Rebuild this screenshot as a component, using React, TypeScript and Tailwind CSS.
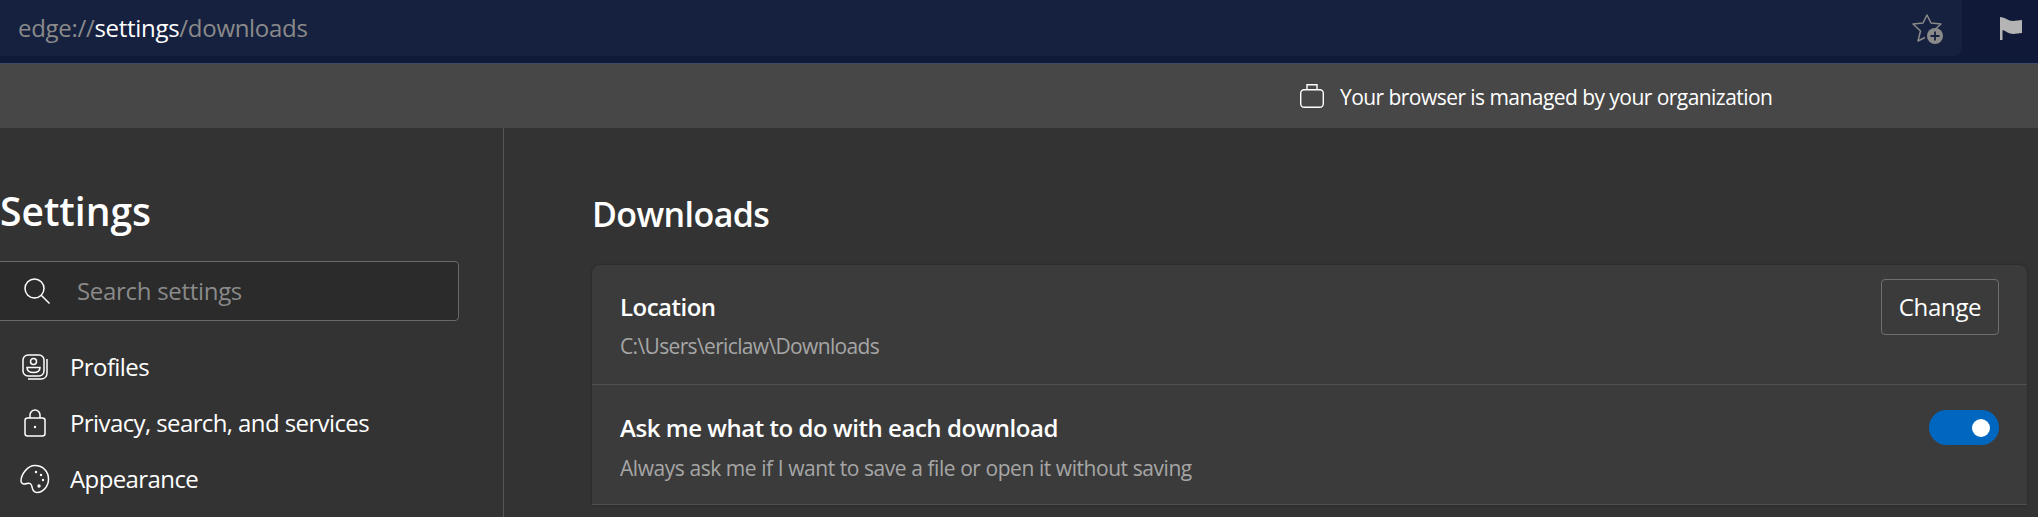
const StarAddIcon = () => (
  <svg width="34" height="34" viewBox="0 0 34 34" fill="none">
    <path
      d="M14 26.500L7 30l2.500-10L2 13l10-1 4-8 4 8 10 1-5 4.500"
      stroke="#8a8a8a"
      strokeWidth="1.500"
      strokeLinejoin="round"
    />
    <circle cx="24" cy="25" r="8" fill="#8a8a8a" />
    <path d="M24 20.500v9M19.500 25h9" stroke="#16213f" strokeWidth="1.800" />
  </svg>
);

const FlagIcon = () => (
  <svg width="22" height="23" viewBox="0 0 22 23">
    <path d="M0 0c5 0 8 4 13 4 3 0 6-1 9-1v13c-3 0-6 1-9 1-4 0-7-3-10.500-4v10H0V0z" fill="#b4b4b4" />
  </svg>
);

const ManagedIcon = () => (
  <svg width="24" height="24" viewBox="0 0 24 24" fill="none" stroke="#fff" strokeWidth="1.400">
    <rect x="0.700" y="5.700" width="22.600" height="17.600" rx="3.500" />
    <path d="M7 5.500V0.700h10V5.500" />
  </svg>
);

const SearchIcon = () => (
  <svg width="26" height="26" viewBox="0 0 26 26" fill="none" stroke="#fff" strokeWidth="1.500">
    <circle cx="10.500" cy="10.500" r="9.500" />
    <path d="M17.500 17.500L25.500 25.500" />
  </svg>
);

const ProfileIcon = () => (
  <svg width="26" height="26" viewBox="0 0 26 26" fill="none" stroke="#fff" strokeWidth="1.500">
    <rect x="1" y="1" width="21" height="21" rx="5" />
    <circle cx="11.500" cy="7.500" r="3" />
    <path d="M5 13.500h13c0 3.500-2.500 5-6.500 5s-6.500-1.500-6.500-5z" />
    <path d="M25 5v14c0 3.500-2.500 6-6 6H6" />
  </svg>
);

const LockIcon = () => (
  <svg width="22" height="28" viewBox="0 0 22 28" fill="none" stroke="#fff" strokeWidth="1.500">
    <rect x="1" y="9" width="20" height="18" rx="2.500" />
    <path d="M6 9V6a5 5 0 0 1 10 0v3" />
    <circle cx="11" cy="18" r="1.200" fill="#fff" stroke="none" />
  </svg>
);

const PaletteIcon = () => (
  <svg width="30" height="30" viewBox="0 0 30 30" fill="none" stroke="#fff" strokeWidth="1.500">
    <path d="M15 1.500c8 0 13.500 6 13.500 13.500S23 28.500 17 28.500c-4 0-4.500-3-5-5.500-.5-3-2-4.500-5-3.500-3 1-6 .5-6-2.500C1 11 7 1.500 15 1.500z" />
    <circle cx="16" cy="8" r="1.200" fill="#fff" stroke="none" />
    <circle cx="21" cy="11" r="1.200" fill="#fff" stroke="none" />
    <circle cx="23" cy="16" r="1.200" fill="#fff" stroke="none" />
    <circle cx="19" cy="22" r="1.700" fill="#fff" stroke="none" />
  </svg>
);

const navItems = [
  { name: "Profiles", icon: <ProfileIcon /> },
  { name: "Privacy, search, and services", icon: <LockIcon /> },
  { name: "Appearance", icon: <PaletteIcon /> },
];

const App = () => {
  return (
    <div className="h-[517px] w-[2038px] overflow-hidden bg-[#333333] font-['Open_Sans','Noto_Sans',sans-serif] text-white">
      {/* browser toolbar */}
      <div className="flex h-[64px] border-b border-[#3c4a6b] bg-[#101a38]">
        <div className="flex h-[56px] w-[1962px] items-center justify-between rounded-br-lg bg-[#16213f] pl-[18px] pr-[17px]">
          <div className="text-[24px] tracking-[-0.3px] text-[#8a8a8a]">
            edge://<span className="text-white">settings</span>/downloads
          </div>
          <StarAddIcon />
        </div>
        <div className="flex h-[56px] flex-1 items-center justify-end pr-[16px]">
          <FlagIcon />
        </div>
      </div>

      {/* managed banner */}
      <div className="flex h-[64px] items-center bg-[#474747] pl-[1300px]">
        <ManagedIcon />
        <span className="ml-[16px] pt-[3px] text-[21px] tracking-[-0.55px]">Your browser is managed by your organization</span>
      </div>

      <div className="flex h-[389px]">
        {/* sidebar */}
        <aside className="w-[504px] shrink-0 border-r border-[#555555] pr-[44px]">
          <h1 className="mt-[58px] text-[39px] leading-[50px] font-semibold">Settings</h1>
          <div className="mt-[25px] -ml-[10px] flex h-[60px] items-center rounded border border-[#6a6a6a] bg-[#2b2b2b] pl-[33px]">
            <SearchIcon />
            <span className="ml-[27px] pb-[1px] text-[24px] tracking-[-0.3px] text-[#8a8a8a]">Search settings</span>
          </div>
          <nav className="mt-[18px] flex flex-col">
            {navItems.map((item) => (
              <div key={item.name} className="flex h-[56px] items-center">
                <div className="flex w-[70px] justify-center">{item.icon}</div>
                <span className="text-[24px] tracking-[-0.6px]">{item.name}</span>
              </div>
            ))}
          </nav>
        </aside>

        {/* content */}
        <main className="flex-1 pl-[88px] pr-[11px]">
          <h2 className="mt-[64px] text-[34px] leading-[45px] font-semibold tracking-[-0.6px]">Downloads</h2>
          <div className="mt-[28px] rounded-t-lg bg-[#3b3b3b] shadow-[0_0_3px_rgba(0,0,0,0.3)]">
            <div className="flex h-[120px] justify-between border-b border-[#505050] px-[28px] pt-[14px]">
              <div className="pt-[12px]">
                <div className="text-[24px] leading-[32px] font-semibold tracking-[-0.5px]">Location</div>
                <div className="mt-[9px] text-[21px] leading-[28px] tracking-[-0.65px] text-[#a6a6a6]">C:\Users\ericlaw\Downloads</div>
              </div>
              <button className="h-[56px] w-[118px] rounded border border-[#6e6e6e] text-[24px] tracking-[-0.3px]">Change</button>
            </div>
            <div className="flex h-[120px] items-start justify-between border-b border-[#505050] px-[28px]">
              <div className="pt-[27px]">
                <div className="text-[24px] leading-[32px] font-semibold tracking-[-0.45px]">Ask me what to do with each download</div>
                <div className="mt-[10px] text-[21px] leading-[28px] tracking-[-0.44px] text-[#a6a6a6]">Always ask me if I want to save a file or open it without saving</div>
              </div>
              <div className="mt-[25px] flex h-[35px] w-[70px] items-center justify-end rounded-full bg-[#0067c0] pr-[9px]">
                <div className="size-[18px] rounded-full bg-white" />
              </div>
            </div>
          </div>
        </main>
      </div>
    </div>
  );
};

export default App;
